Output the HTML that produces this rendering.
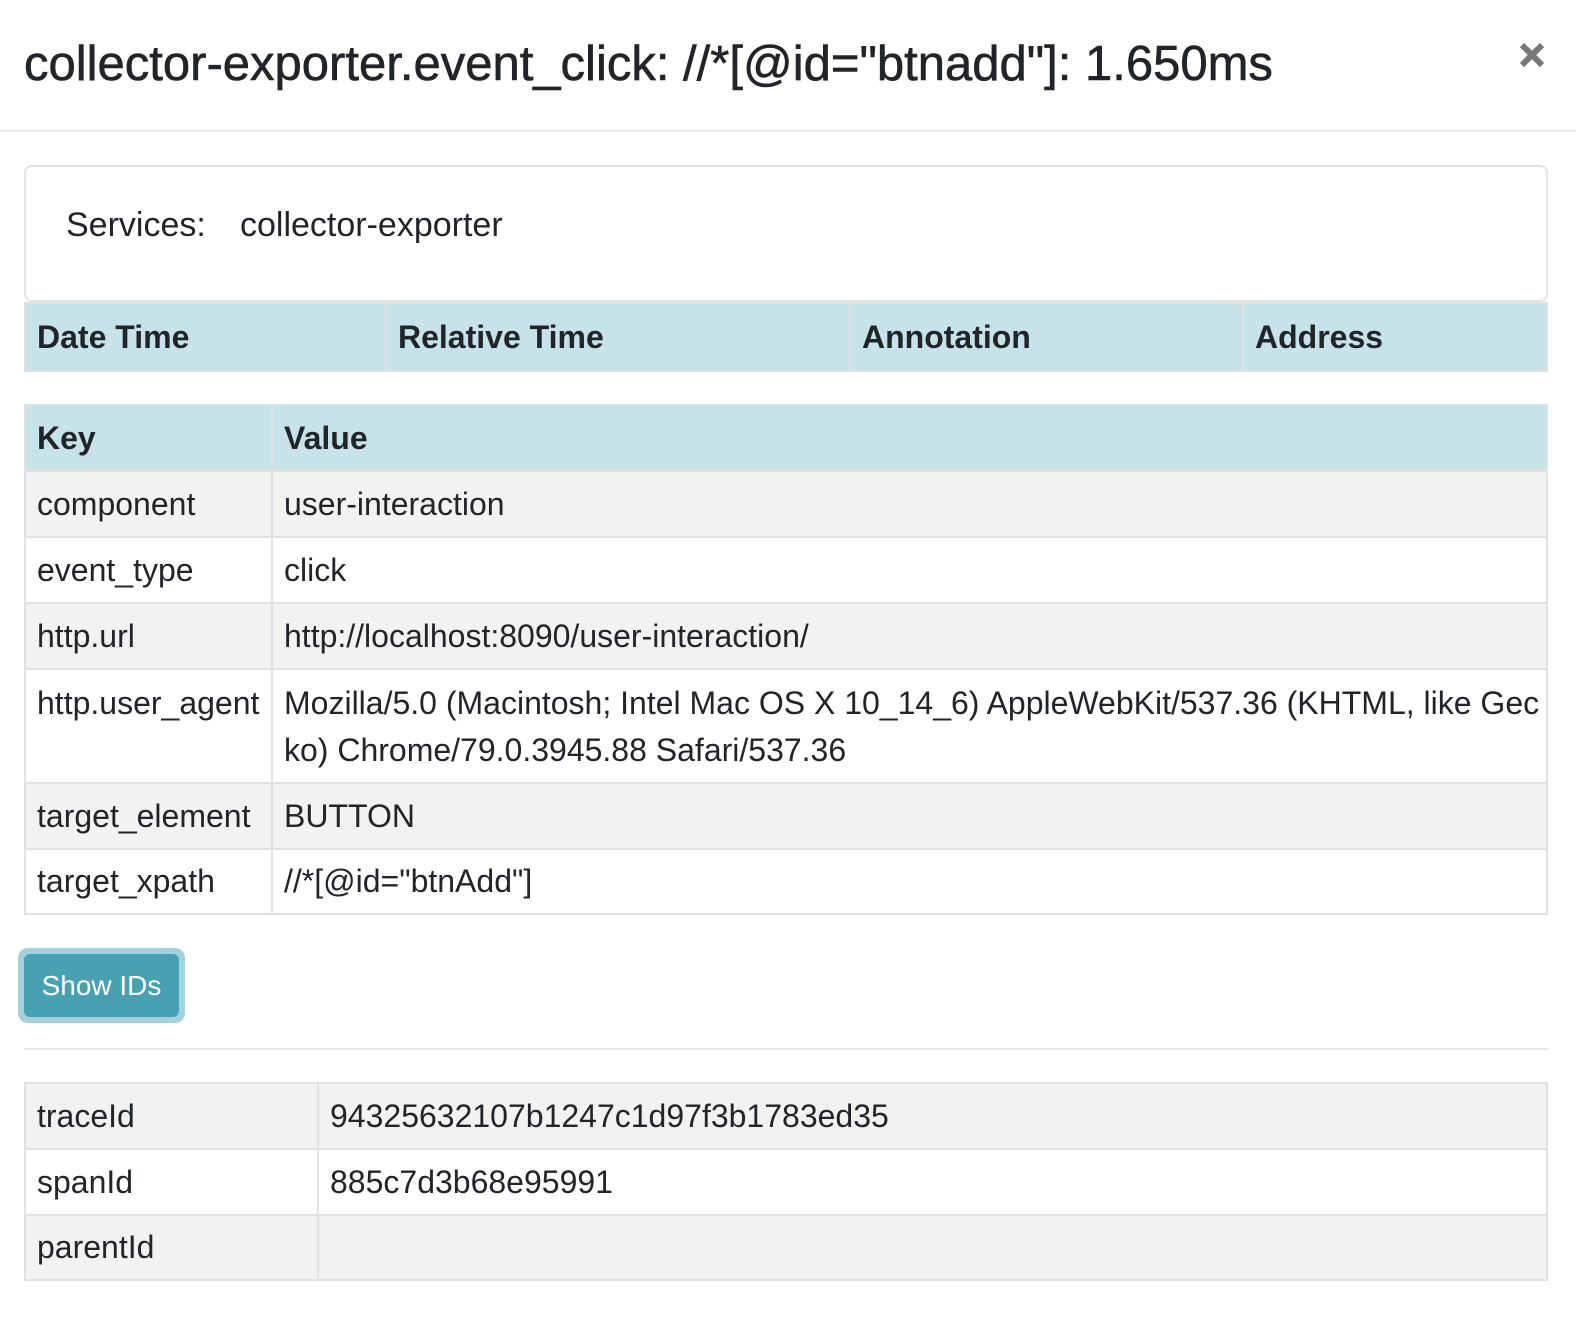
<!DOCTYPE html>
<html><head><meta charset="utf-8"><style>
*{margin:0;padding:0;box-sizing:border-box}
body{width:1576px;height:1338px;background:#fff;font-family:"Liberation Sans",sans-serif;color:#212529;position:relative;overflow:hidden}
.a{position:absolute}
h1{position:absolute;left:24px;top:36px;font-size:49px;font-weight:normal;white-space:nowrap;color:#212529;-webkit-text-stroke:0.6px #212529}
.x{position:absolute;left:1518px;top:40px;width:28px;height:30px}
.hr{position:absolute;left:0;top:130px;width:1576px;height:2px;background:#e9ecef}
.card{position:absolute;left:24px;top:165px;width:1524px;height:137px;border:2px solid #e3e3e3;border-radius:8px}
.svc{position:absolute;top:206px;font-size:34px;white-space:nowrap}
.row{position:absolute;left:24px;width:1524px;border:2px solid #dee2e6;border-top:none}
.c{position:absolute;top:0;height:100%;padding-left:11px;font-size:32px;white-space:nowrap;display:flex;align-items:center}
.b{border-left:2px solid #dee2e6}
.hd{background:#c6e3ea;font-weight:bold}
.g{background:#f2f2f2}
.btn{position:absolute;left:18px;top:948px;width:167px;height:75px;border-radius:10px;background:#a5d1dd}
.btn div{position:absolute;left:6px;top:6px;width:155px;height:63px;border-radius:6px;background:#48a0b3;color:#fff;font-size:28px;text-align:center;line-height:63px}
</style></head><body>
<h1>collector-exporter.event_click: //*[@id="btnadd"]: 1.650ms</h1>
<svg class="x" viewBox="0 0 28 30"><path d="M4 5 L24 25 M24 5 L4 25" stroke="#777" stroke-width="6"/></svg>
<div class="hr"></div>
<div class="card"></div>
<div class="svc" style="left:66px">Services:</div>
<div class="svc" style="left:240px">collector-exporter</div>

<div class="row hd" style="top:302px;height:70px;border-top:2px solid #dee2e6">
<div class="c" style="left:0;width:361px">Date Time</div>
<div class="c b" style="left:359px;width:466px">Relative Time</div>
<div class="c b" style="left:823px;width:393px">Annotation</div>
<div class="c b" style="left:1216px;width:306px">Address</div>
</div>

<div class="row hd" style="top:404px;height:68px;border-top:2px solid #dee2e6"><div class="c" style="left:0">Key</div><div class="c b" style="left:245px;right:0">Value</div></div>
<div class="row g" style="top:472px;height:66px"><div class="c" style="left:0">component</div><div class="c b" style="left:245px;right:0">user-interaction</div></div>
<div class="row" style="top:538px;height:66px"><div class="c" style="left:0">event_type</div><div class="c b" style="left:245px;right:0">click</div></div>
<div class="row g" style="top:604px;height:66px"><div class="c" style="left:0">http.url</div><div class="c b" style="left:245px;right:0">http://localhost:8090/user-interaction/</div></div>
<div class="row" style="top:670px;height:114px"><div class="c" style="left:0;align-items:flex-start;padding-top:10px;line-height:47px">http.user_agent</div><div class="c b" style="left:245px;right:0;align-items:flex-start;padding-top:10px;line-height:47px">Mozilla/5.0 (Macintosh; Intel Mac OS X 10_14_6) AppleWebKit/537.36 (KHTML, like Gec<br>ko) Chrome/79.0.3945.88 Safari/537.36</div></div>
<div class="row g" style="top:784px;height:66px"><div class="c" style="left:0">target_element</div><div class="c b" style="left:245px;right:0">BUTTON</div></div>
<div class="row" style="top:850px;height:65px"><div class="c" style="left:0">target_xpath</div><div class="c b" style="left:245px;right:0">//*[@id="btnAdd"]</div></div>

<div class="btn"><div>Show IDs</div></div>
<div class="a" style="left:24px;top:1048px;width:1524px;height:2px;background:#e6e6e6"></div>

<div class="row g" style="top:1082px;height:68px;border-top:2px solid #dee2e6"><div class="c" style="left:0">traceId</div><div class="c b" style="left:291px;right:0">94325632107b1247c1d97f3b1783ed35</div></div>
<div class="row" style="top:1150px;height:66px"><div class="c" style="left:0">spanId</div><div class="c b" style="left:291px;right:0">885c7d3b68e95991</div></div>
<div class="row g" style="top:1216px;height:65px"><div class="c" style="left:0">parentId</div><div class="c b" style="left:291px;right:0"></div></div>
</body></html>
